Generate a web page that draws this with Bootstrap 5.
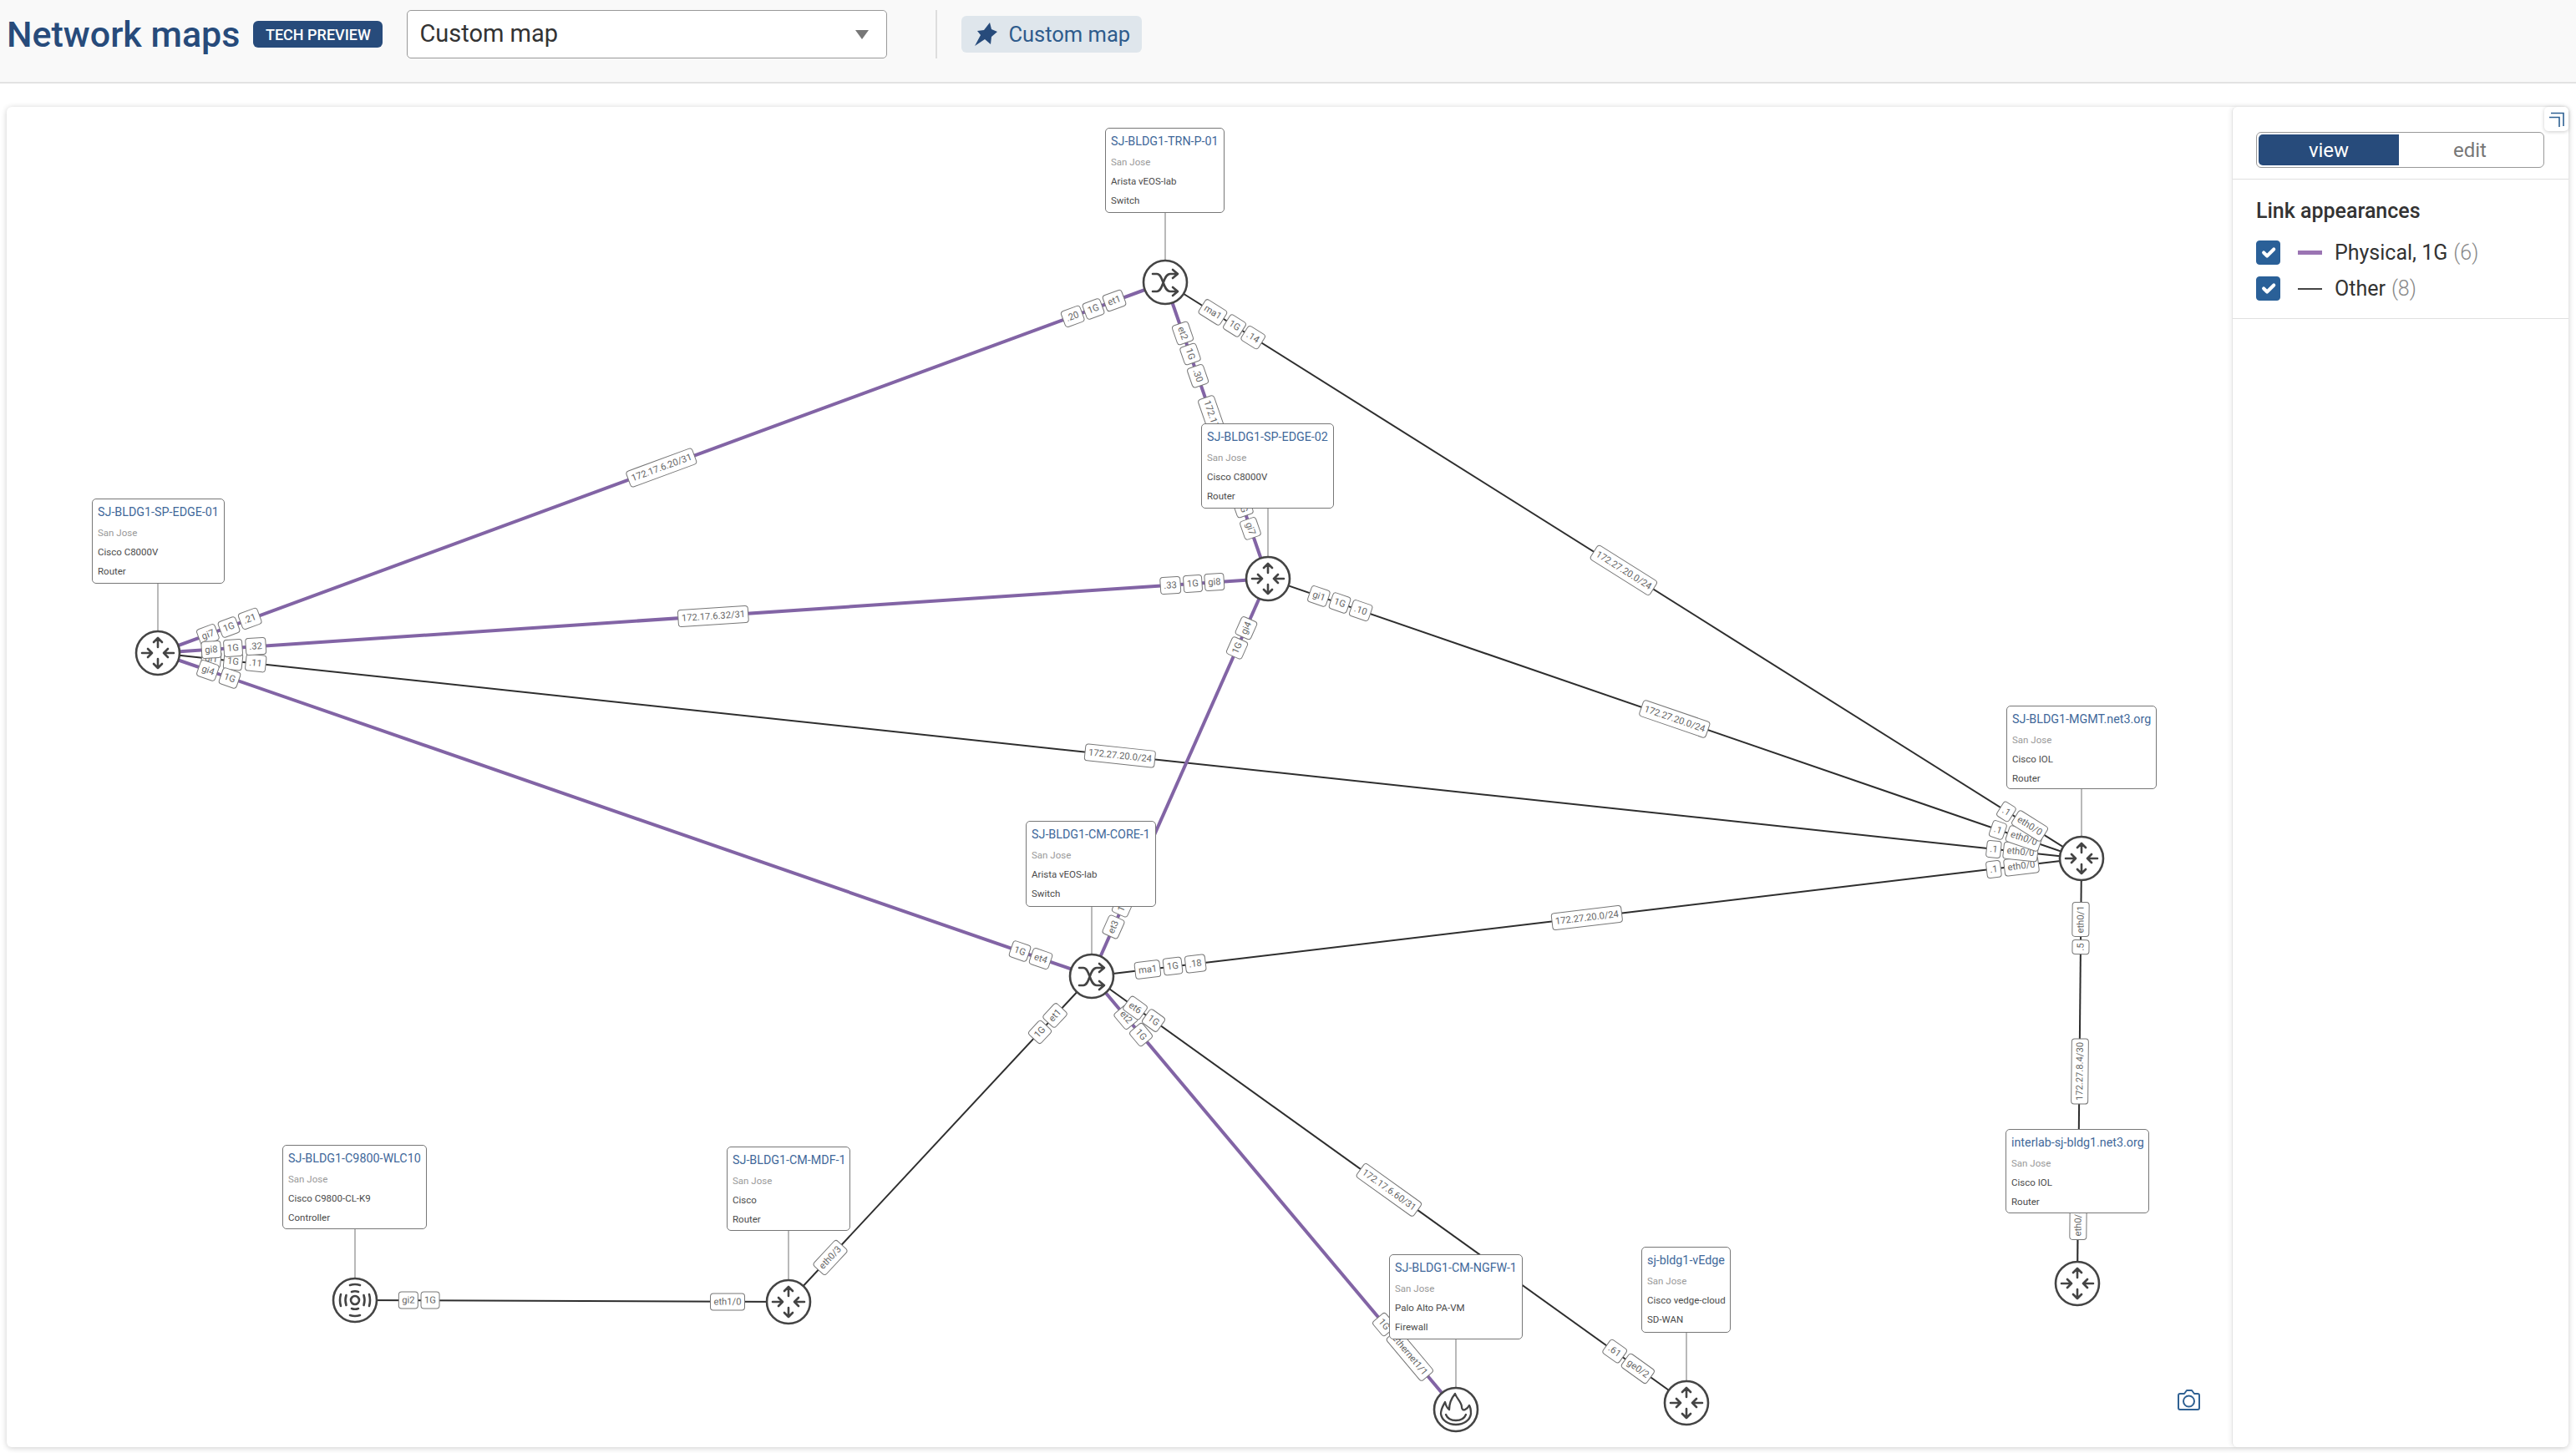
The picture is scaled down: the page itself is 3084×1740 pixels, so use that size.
<!DOCTYPE html>
<html lang="en">

<head>
    <meta charset="UTF-8">
    <meta name="viewport" content="width=device-width, initial-scale=1.0">
    <title>Network maps</title>
    <link href="https://cdn.jsdelivr.net/npm/bootstrap@5.3.0/dist/css/bootstrap.min.css" rel="stylesheet">
    <style>
        body { font-family: Roboto, "Liberation Sans", sans-serif; background: #fff; color: #333; width: 3084px; height: 1740px; overflow: hidden; }

        /* header */
        .page-header { height: 100px; padding: 0 0 16px 8px; background: #f9f9f9; border-bottom: 2px solid #e2e2e2; }
        .page-title { font-size: 43px; font-weight: 500; color: #274b7b; margin: 0 16px 0 0; line-height: 1; white-space: nowrap; }
        .tech-badge { width: 155px; height: 32px; background: #274b7b; color: #fff; font-size: 18px; font-weight: 500; border-radius: 6px; margin-right: 29px; }
        .map-select { width: 575px; height: 58px; font-size: 29px; color: #333; padding: 0 14px; border: 1px solid #999; border-radius: 5px; margin-right: 58px; box-shadow: none;
            background-size: 20px 14px; background-position: right 19px center;
            background-image: url("data:image/svg+xml,%3csvg xmlns='http://www.w3.org/2000/svg' viewBox='0 0 20 14'%3e%3cpath fill='%23777' d='M2 2h16l-8 11z'/%3e%3c/svg%3e"); }
        .head-divider { width: 2px; height: 58px; background: #dedede; margin-right: 29px; }
        .pin-btn { width: 216px; height: 44px; background: #dfe6ec; color: #2f5c8c; font-size: 25.5px; border-radius: 6px; padding: 0 0 0 14px; gap: 12px; border: 0; }

        /* map + sidebar card */
        .map-card { position: absolute; left: 8px; top: 128px; width: 3067px; height: 1605px; border: 0; border-radius: 6px; box-shadow: 0 1px 7px rgba(0, 0, 0, .2); }
        .map-area { width: 2664px; height: 1605px; overflow: hidden; }
        .map-area svg.links { position: absolute; left: 0; top: 0; }
        .side-panel { width: 403px; height: 1605px; border-left: 1px solid #e4e4e4; box-shadow: -2px 0 5px rgba(0, 0, 0, .06); border-radius: 6px; }

        .node-box { position: absolute; background: #fff; border: 1px solid #777; border-radius: 5px; padding: 0 6px; font-size: 11.5px; color: #4a4a4a; white-space: nowrap; z-index: 3; }
        .node-box div { position: absolute; left: 6px; line-height: 16px; }
        .node-box .nm { top: 6.5px; font-size: 14.3px; color: #41689a; }
        .node-box .loc { top: 32px; color: #999; }
        .node-box .mod { top: 55px; }
        .node-box .typ { top: 78px; }

        .link-lbl { position: absolute; height: 21px; line-height: 19px; padding: 0 3.5px; font-size: 11.2px; color: #666; background: #fff; border: 1px solid #777; border-radius: 4px; white-space: nowrap; z-index: 2; }

        .cam-btn { position: absolute; left: 2598px; top: 1535px; width: 29px; height: 27px; line-height: 0; }
        .collapse-btn { position: absolute; right: 0; top: 0; width: 29px; height: 29px; background: #fff; border-radius: 5px; box-shadow: 0 1px 4px rgba(0, 0, 0, .2); }

        .mode-wrap { height: 87px; padding: 30px 29px 0 28px; border-bottom: 1px solid #e0e0e0; }
        .mode-group { width: 345px; height: 43px; padding: 2px; border: 1px solid #999; border-radius: 6px; }
        .mode-group .btn { font-size: 24px; line-height: 1; padding: 0; border: 0; border-radius: 5px; }
        .mode-group .on { flex: 0 0 168px; background: #274b7b; color: #fff; }
        .mode-group .off { color: #777; }

        .legend { height: 167px; padding: 24px 28px 0; border-bottom: 1px solid #e0e0e0; }
        .legend h6 { font-size: 25px; font-weight: 500; color: #333; margin: 0 0 21px; line-height: 28px; }
        .legend-row { height: 29px; margin-bottom: 14px; font-size: 25px; line-height: 29px; }
        .legend-row .form-check-input { width: 29px; height: 29px; margin: 0; background-color: #2a6098; border-color: #2a6098; border-radius: 4px; flex: none; }
        .legend-row .swatch { width: 29px; margin: 0 15px 0 21px; flex: none; }
        .swatch.purple { height: 5px; background: #9b74b3; }
        .swatch.dark { height: 2px; background: #444; }
        .legend-row .count { color: #888; font-weight: 300; margin-left: 7px; }
    </style>
</head>

<body>
    <header class="page-header d-flex align-items-center">
        <h1 class="page-title">Network maps</h1>
        <span class="tech-badge d-flex align-items-center justify-content-center">TECH PREVIEW</span>
        <select class="form-select map-select">
            <option>Custom map</option>
        </select>
        <div class="head-divider"></div>
        <button class="btn pin-btn d-flex align-items-center">
            <svg width="30" height="28" viewBox="0 0 30 28"><path fill="#274b7b" d="M20 0l2 8 7 3-7 6-1 9-7-6L2 28l7-13-4-5 8-1z"/></svg>
            Custom map
        </button>
    </header>

    <main class="card map-card flex-row">
        <div class="map-area position-relative" id="map">
            <div class="cam-btn">
                <svg width="29" height="27" viewBox="0 0 29 27" fill="none" stroke="#2f6193" stroke-width="2">
                    <path d="M2 8q0-2 2-2h5l3-4h6l3 4h4q2 0 2 2v15q0 2-2 2H4q-2 0-2-2z" stroke-linejoin="round"/>
                    <circle cx="14.5" cy="15" r="6.5"/>
                </svg>
            </div>
        </div>
        <aside class="side-panel position-relative">
            <div class="collapse-btn d-flex align-items-center justify-content-center">
                <svg width="20" height="20" viewBox="0 0 20 20" fill="none" stroke="#2f6193" stroke-width="1.6">
                    <path d="M3 2.5H18V18"/><path d="M1 7.5H13V19"/>
                </svg>
            </div>
            <div class="mode-wrap">
                <div class="mode-group btn-group d-flex">
                    <button class="btn on">view</button>
                    <button class="btn off flex-grow-1">edit</button>
                </div>
            </div>
            <div class="legend">
                <h6>Link appearances</h6>
                <div class="legend-row d-flex align-items-center">
                    <input class="form-check-input" type="checkbox" checked>
                    <span class="swatch purple"></span>
                    <span>Physical, 1G</span><span class="count">(6)</span>
                </div>
                <div class="legend-row d-flex align-items-center">
                    <input class="form-check-input" type="checkbox" checked>
                    <span class="swatch dark"></span>
                    <span>Other</span><span class="count">(8)</span>
                </div>
            </div>
        </aside>
    </main>

    <script>
        // page coords -> map coords
        const OX = 8, OY = 128;
        const SVGNS = 'http://www.w3.org/2000/svg';
        const PURPLE = '#8264a5', DARK = '#2e2e2e';

        const nodes = {
            trn: { c: [1395, 338], box: [1323, 153, 143, 102], name: 'SJ-BLDG1-TRN-P-01', model: 'Arista vEOS-lab', type: 'Switch', icon: 'switch' },
            sp2: { c: [1518, 693], box: [1438, 507, 159, 102], name: 'SJ-BLDG1-SP-EDGE-02', model: 'Cisco C8000V', type: 'Router', icon: 'router' },
            sp1: { c: [189, 782], box: [110, 597, 159, 102], name: 'SJ-BLDG1-SP-EDGE-01', model: 'Cisco C8000V', type: 'Router', icon: 'router' },
            core: { c: [1307, 1169], box: [1228, 983, 156, 103], name: 'SJ-BLDG1-CM-CORE-1', model: 'Arista vEOS-lab', type: 'Switch', icon: 'switch' },
            mgmt: { c: [2492, 1028], box: [2402, 845, 180, 100], name: 'SJ-BLDG1-MGMT.net3.org', model: 'Cisco IOL', type: 'Router', icon: 'router' },
            inter: { c: [2487, 1537], box: [2401, 1352, 172, 101], name: 'interlab-sj-bldg1.net3.org', model: 'Cisco IOL', type: 'Router', icon: 'router' },
            wlc: { c: [425, 1557], box: [338, 1371, 173, 101], name: 'SJ-BLDG1-C9800-WLC10', model: 'Cisco C9800-CL-K9', type: 'Controller', icon: 'wlc' },
            mdf: { c: [944, 1559], box: [870, 1373, 148, 101], name: 'SJ-BLDG1-CM-MDF-1', model: 'Cisco', type: 'Router', icon: 'router' },
            ngfw: { c: [1743, 1688], box: [1663, 1502, 160, 102], name: 'SJ-BLDG1-CM-NGFW-1', model: 'Palo Alto PA-VM', type: 'Firewall', icon: 'firewall' },
            vedge: { c: [2019, 1680], box: [1965, 1493, 107, 103], name: 'sj-bldg1-vEdge', model: 'Cisco vedge-cloud', type: 'SD-WAN', icon: 'router' }
        };

        // from, to, physical?, labels outward from each end, middle label
        const links = [
            ['core', 'ngfw', 1, ['et2', '1G'], ['ethernet1/1', '1G'], ''],
            ['core', 'vedge', 0, ['et6', '1G'], ['ge0/2', '.61'], '172.17.6.60/31'],
            ['core', 'mgmt', 0, ['ma1', '1G', '.18'], ['eth0/0', '.1'], '172.27.20.0/24'],
            ['sp1', 'mgmt', 0, ['gi1', '1G', '.11'], ['eth0/0', '.1'], '172.27.20.0/24'],
            ['sp2', 'mgmt', 0, ['gi1', '1G', '.10'], ['eth0/0', '.1'], '172.27.20.0/24'],
            ['trn', 'mgmt', 0, ['ma1', '1G', '.14'], ['eth0/0', '.1'], '172.27.20.0/24'],
            ['trn', 'sp1', 1, ['et1', '1G', '.20'], ['gi7', '1G', '.21'], '172.17.6.20/31'],
            ['sp2', 'sp1', 1, ['gi8', '1G', '.33'], ['gi8', '1G', '.32'], '172.17.6.32/31'],
            ['core', 'sp1', 1, ['et4', '1G'], ['gi4', '1G'], ''],
            ['trn', 'sp2', 1, ['et2', '1G', '.30'], ['gi7', '1G', '.31'], '172.17.6.28/31'],
            ['sp2', 'core', 1, ['gi4', '1G'], ['et3', '1G'], ''],
            ['mgmt', 'inter', 0, ['eth0/1', '.5'], ['eth0/3'], '172.27.8.4/30'],
            ['core', 'mdf', 0, ['et1', '1G'], ['eth0/3'], ''],
            ['wlc', 'mdf', 0, ['gi2', '1G'], ['eth1/0'], '']
        ];

        const icons = {
            router: `<g fill="none" stroke-linecap="round" stroke-linejoin="round">
                <path d="M0-7V-18M-5-13L0-18 5-13M0 7V18M-5 13L0 18 5 13M-19 0H-7M-12-5L-7 0-12 5M19 0H7M12-5L7 0 12 5"/></g>`,
            switch: `<g fill="none" stroke-linecap="round" stroke-linejoin="round">
                <path d="M-15-10H-10C-2-10-3 11 6 11H14M-15 11H-10C-2 11-3-10 6-10H14M9-15L15-10 9-5M9 6L15 11 9 16"/></g>`,
            wlc: `<g fill="none" stroke-linecap="round">
                <circle r="5"/>
                <path d="M-10.5-6Q-12.5 0-10.5 6M10.5-6Q12.5 0 10.5 6M-17-7Q-19 0-17 7M17-7Q19 0 17 7M-4-10Q0-11.5 4-10M-6-18Q0-20 6-18M-4 10Q0 11.5 4 10M-6 18Q0 20 6 18"/></g>`,
            firewall: `<g fill="none" stroke-linejoin="round" stroke-linecap="round" stroke-width="2.3">
                <path d="M-1-19C1-13 7-9 7-3 7 0 9 1 11 0 13-1 15-3 16-5 18-2 18 2 18 5 17 13 9 18 0 18-9 18-17 13-18 5-18-1-15-5-13-9-12-5-11-2-8 0-8-7-5-14-1-19Z"/>
                <path d="M-12 6C-10 11-5 13 0 13 5 13 10 11 12 6"/></g>`
        };

        const map = document.getElementById('map');
        const svg = document.createElementNS(SVGNS, 'svg');
        svg.setAttribute('class', 'links');
        svg.setAttribute('width', 2664);
        svg.setAttribute('height', 1605);
        svg.setAttribute('viewBox', `${OX} ${OY} 2664 1605`);
        let markup = '';

        // thin stem from box to its node
        Object.values(nodes).forEach(n => {
            markup += `<line x1="${n.c[0]}" y1="${n.box[1] + n.box[3]}" x2="${n.c[0]}" y2="${n.c[1]}" stroke="#8a8a8a" stroke-width="1.2"/>`;
        });
        links.forEach(l => {
            const a = nodes[l[0]].c, b = nodes[l[1]].c;
            markup += `<line x1="${a[0]}" y1="${a[1]}" x2="${b[0]}" y2="${b[1]}" stroke="${l[2] ? PURPLE : DARK}" stroke-width="${l[2] ? 4 : 2}"/>`;
        });
        Object.values(nodes).forEach(n => {
            markup += `<g transform="translate(${n.c[0]} ${n.c[1]})" stroke="#444" stroke-width="2.6"><circle r="26" fill="#fff"/>${icons[n.icon]}</g>`;
        });
        svg.innerHTML = markup;
        map.prepend(svg);

        function addLabel(text, x, y, deg) {
            const el = document.createElement('div');
            el.className = 'link-lbl';
            el.textContent = text;
            el.style.left = (x - OX) + 'px';
            el.style.top = (y - OY) + 'px';
            el.style.transform = `translate(-50%,-50%) rotate(${deg}deg)`;
            map.appendChild(el);
            return el;
        }

        // chain of labels walking from node p along unit vector u
        function addChain(texts, p, u, deg) {
            let d = 52;
            texts.forEach(t => {
                const el = addLabel(t, 0, 0, deg);
                const w = el.offsetWidth;
                el.style.left = (p[0] + u[0] * (d + w / 2) - OX) + 'px';
                el.style.top = (p[1] + u[1] * (d + w / 2) - OY) + 'px';
                d += w + 3;
            });
        }

        links.forEach(l => {
            const a = nodes[l[0]].c, b = nodes[l[1]].c;
            const dx = b[0] - a[0], dy = b[1] - a[1], len = Math.hypot(dx, dy);
            let deg = Math.atan2(dy, dx) * 180 / Math.PI;
            if (deg > 89.99) deg -= 180;
            if (deg <= -90) deg += 180;
            if (deg > 89.99) deg -= 180;
            addChain(l[3], a, [dx / len, dy / len], deg);
            addChain(l[4], b, [-dx / len, -dy / len], deg);
            if (l[5]) addLabel(l[5], (a[0] + b[0]) / 2, (a[1] + b[1]) / 2, deg);
        });

        Object.values(nodes).forEach(n => {
            const el = document.createElement('div');
            el.className = 'node-box';
            el.style.cssText = `left:${n.box[0] - OX}px;top:${n.box[1] - OY}px;width:${n.box[2]}px;height:${n.box[3]}px`;
            el.innerHTML = `<div class="nm">${n.name}</div><div class="loc">San Jose</div><div class="mod">${n.model}</div><div class="typ">${n.type}</div>`;
            map.appendChild(el);
        });
    </script>
    <script src="https://cdn.jsdelivr.net/npm/bootstrap@5.3.0/dist/js/bootstrap.bundle.min.js"></script>
</body>

</html>
